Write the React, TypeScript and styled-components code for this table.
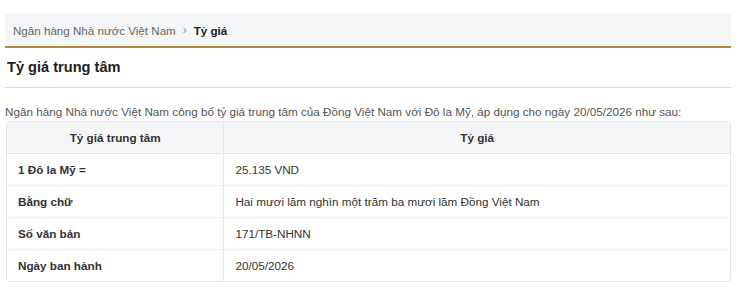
import styled, { createGlobalStyle } from "styled-components";

const GlobalStyle = createGlobalStyle`
  body {
    margin: 0;
    background: #fff;
    font-family: "Liberation Sans", Arial, sans-serif;
    color: #333;
  }
`;

const Page = styled.div`
  padding: 14px 9px 0 5px;
`;

const Breadcrumb = styled.nav`
  display: flex;
  align-items: center;
  gap: 7px;
  height: 32px;
  padding: 0 8px;
  background: #f5f6f8;
  border-bottom: 2px solid #b5883f;
  font-size: 11.6px;
  color: #666;
`;

const Crumb = styled.span<{ $active?: boolean }>`
  color: ${(p) => (p.$active ? "#222" : "#666")};
  font-weight: ${(p) => (p.$active ? 700 : 400)};
`;

const Sep = styled.span`
  color: #999;
  font-size: 12px;
`;

const Title = styled.h1`
  margin: 0;
  padding: 11px 2px 12px;
  font-size: 14.6px;
  font-weight: 700;
  color: #222;
  border-bottom: 1px solid #d9d9d9;
`;

const Intro = styled.p`
  margin: 17px 0 3px;
  font-size: 11.7px;
  color: #555;
`;

const TableWrap = styled.div`
  margin-left: 1px;
  border: 1px solid #e6e6e6;
  border-radius: 4px;
  overflow: hidden;
`;

const Table = styled.table`
  width: 100%;
  border-collapse: collapse;
  font-size: 11.7px;
  color: #333;
`;

const Th = styled.th`
  height: 31px;
  padding: 0 10px;
  background: #f5f6f8;
  font-weight: 700;
  text-align: center;
  border-bottom: 1px solid #e6e6e6;
  & + & {
    border-left: 1px solid #e6e6e6;
  }
`;

const Td = styled.td<{ $label?: boolean }>`
  height: 31px;
  padding: 0 11px;
  font-weight: ${(p) => (p.$label ? 700 : 400)};
  border-top: 1px solid #eeeeee;
  & + & {
    border-left: 1px solid #e6e6e6;
  }
`;

const rows = [
  ["1 Đô la Mỹ =", "25.135 VND"],
  ["Bằng chữ", "Hai mươi lăm nghìn một trăm ba mươi lăm Đồng Việt Nam"],
  ["Số văn bản", "171/TB-NHNN"],
  ["Ngày ban hành", "20/05/2026"],
];

const App = () => {
  return (
    <Page>
      <GlobalStyle />
      <Breadcrumb>
        <Crumb>Ngân hàng Nhà nước Việt Nam</Crumb>
        <Sep>›</Sep>
        <Crumb $active>Tỷ giá</Crumb>
      </Breadcrumb>
      <Title>Tỷ giá trung tâm</Title>
      <Intro>
        Ngân hàng Nhà nước Việt Nam công bố tỷ giá trung tâm của Đồng Việt Nam
        với Đô la Mỹ, áp dụng cho ngày 20/05/2026 như sau:
      </Intro>
      <TableWrap>
        <Table>
          <thead>
            <tr>
              <Th style={{ width: "30%" }}>Tỷ giá trung tâm</Th>
              <Th>Tỷ giá</Th>
            </tr>
          </thead>
          <tbody>
            {rows.map(([label, value]) => (
              <tr key={label}>
                <Td $label>{label}</Td>
                <Td>{value}</Td>
              </tr>
            ))}
          </tbody>
        </Table>
      </TableWrap>
    </Page>
  );
};

export default App;
